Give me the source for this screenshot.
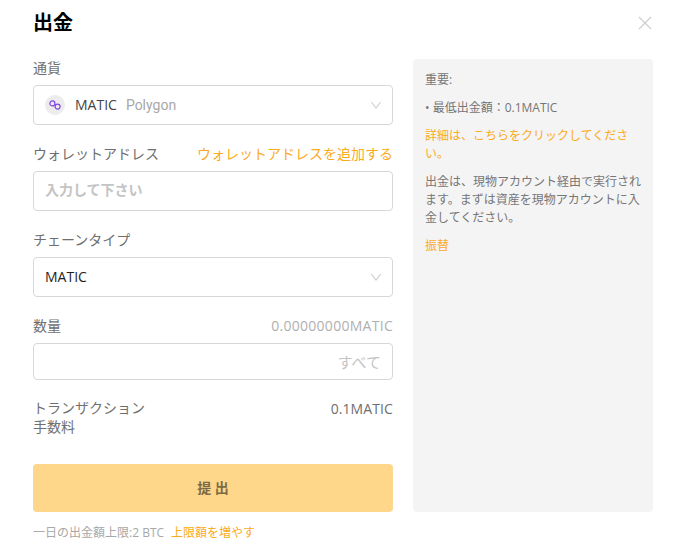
<div class="modal">
  <header class="head">
    <h1>出金</h1>
    <button class="close" aria-label="閉じる">
      <svg width="14" height="14" viewBox="0 0 14 14" fill="none" stroke="#cfcfcf" stroke-width="1.3">
        <path d="M1 1l12 12M13 1L1 13" />
      </svg>
    </button>
  </header>

  <div class="body">
    <form class="form">
      <div class="label first"><span>通貨</span></div>
      <div class="box select">
        <span class="coin">
          <svg width="12" height="10" viewBox="0 0 12 10" fill="none" stroke="#8247e5" stroke-width="1.2">
            <circle cx="3.4" cy="3.4" r="2.500" />
            <circle cx="8.600" cy="6.600" r="2.500" />
          </svg>
        </span>
        <span class="sym">MATIC</span>
        <span class="name">Polygon</span>
        <svg class="chev" width="10" height="8" viewBox="0 0 10 8" fill="none" stroke="#cfcfcf" stroke-width="1.100"><path d="M.4 1 5 7l4.600-6" /></svg>
      </div>

      <div class="label"><span>ウォレットアドレス</span><a href="#add">ウォレットアドレスを追加する</a></div>
      <div class="box"><span class="placeholder">入力して下さい</span></div>

      <div class="label"><span>チェーンタイプ</span></div>
      <div class="box select">
        <span class="sym dark">MATIC</span>
        <svg class="chev" width="10" height="8" viewBox="0 0 10 8" fill="none" stroke="#cfcfcf" stroke-width="1.100"><path d="M.4 1 5 7l4.600-6" /></svg>
      </div>

      <div class="label amount"><span>数量</span><span class="avail">0.00000000MATIC</span></div>
      <div class="box short"><span class="all">すべて</span></div>

      <div class="fee">
        <div class="fee-label">
          <span>トランザクション</span>
          <span class="sub">手数料</span>
        </div>
        <span class="fee-value">0.1MATIC</span>
      </div>

      <button class="submit" type="button">提 出</button>

      <p class="limit">一日の出金額上限:2 BTC<a href="#up">上限額を増やす</a></p>
    </form>

    <aside class="info">
      <p>重要:</p>
      <p class="min">• 最低出金額：0.1MATIC</p>
      <a class="more" href="#more">詳細は、こちらをクリックしてください。</a>
      <p class="desc">出金は、現物アカウント経由で実行されます。まずは資産を現物アカウントに入金してください。</p>
      <a class="transfer" href="#transfer">振替</a>
    </aside>
  </div>
</div>

<style>
  :global(body) {
    margin: 0;
    background: #fff;
  }

  .modal {
    width: 694px;
    height: 553px;
    box-sizing: border-box;
    padding: 0 41px 0 33px;
    overflow: hidden;
    font-family: "Open Sans", "Noto Sans CJK JP", sans-serif;
    font-size: 14px;
    color: #707a8a;
  }

  .head {
    height: 46px;
    margin-bottom: 1px;
    display: flex;
    align-items: center;
    justify-content: space-between;
  }

  h1 {
    margin: 0 0 3px;
    font-size: 20px;
    font-weight: 700;
    color: #000;
  }

  .close {
    padding: 0;
    border: 0;
    background: none;
    display: flex;
    margin-right: 1px;
  }

  .body {
    display: flex;
    gap: 20px;
  }

  .form {
    width: 360px;
    flex: none;
  }

  .label {
    display: flex;
    justify-content: space-between;
    align-items: center;
    height: 20px;
    margin: 18px 0 8px;
    color: #6f6f6f;
  }

  .label.first {
    margin-top: 10px;
    margin-bottom: 8px;
  }

  .label.amount {
    margin-top: 18px;
    margin-bottom: 8px;
  }

  .label a,
  .limit a,
  .more,
  .transfer {
    color: #fbab1c;
    text-decoration: none;
  }

  .avail {
    color: #b0b0b0;
    letter-spacing: 0.28px;
  }

  .box {
    height: 40px;
    box-sizing: border-box;
    border: 1px solid #d8d8d8;
    border-radius: 4px;
    padding: 0 11px;
    display: flex;
    align-items: center;
  }

  .box.short {
    height: 37px;
    justify-content: flex-end;
  }

  .coin {
    width: 20px;
    height: 20px;
    border-radius: 50%;
    background: #ececec;
    display: flex;
    align-items: center;
    justify-content: center;
    margin-right: 10px;
  }

  .sym {
    color: #444;
    font-weight: 500;
    margin-top: -1px;
  }

  .sym.dark {
    color: #1e1e1e;
  }

  .name {
    font-family: Roboto, sans-serif;
    color: #a8a8a8;
    margin-left: 9px;
    margin-top: -1px;
  }

  .chev {
    margin-left: auto;
  }

  .placeholder {
    color: #c4c4c4;
    font-weight: 700;
    margin-top: -4px;
  }

  .all {
    color: #c4c4c4;
    font-size: 15px;
  }

  .fee {
    display: flex;
    justify-content: space-between;
    align-items: flex-start;
    margin-top: 18px;
    color: #6f6f6f;
    line-height: 20px;
  }

  .fee-value {
    letter-spacing: 0.1px;
    margin-top: 1px;
  }

  .fee-label {
    display: flex;
    flex-direction: column;
  }

  .fee-label .sub {
    line-height: 18px;
  }

  .submit {
    display: block;
    width: 100%;
    height: 48px;
    margin-top: 28px;
    padding: 0 0 2px;
    border: 0;
    border-radius: 4px;
    background: #fed78a;
    color: #7d6a45;
    font: inherit;
    font-weight: 700;
  }

  .limit {
    margin: 13px 0 0;
    font-size: 12px;
    line-height: 16px;
    color: #a8a8a8;
  }

  .limit a {
    margin-left: 7px;
  }

  .info {
    width: 240px;
    height: 453px;
    box-sizing: border-box;
    margin-top: 12px;
    padding: 12px;
    background: #f4f4f4;
    border-radius: 4px;
    font-size: 12px;
    line-height: 18px;
    color: #767676;
  }

  .info p {
    margin: 0;
  }

  .info .min {
    margin-top: 10px;
  }

  .more {
    display: block;
    margin-top: 10px;
  }

  .info .desc {
    margin-top: 10px;
  }

  .transfer {
    display: block;
    margin-top: 10px;
  }
</style>
